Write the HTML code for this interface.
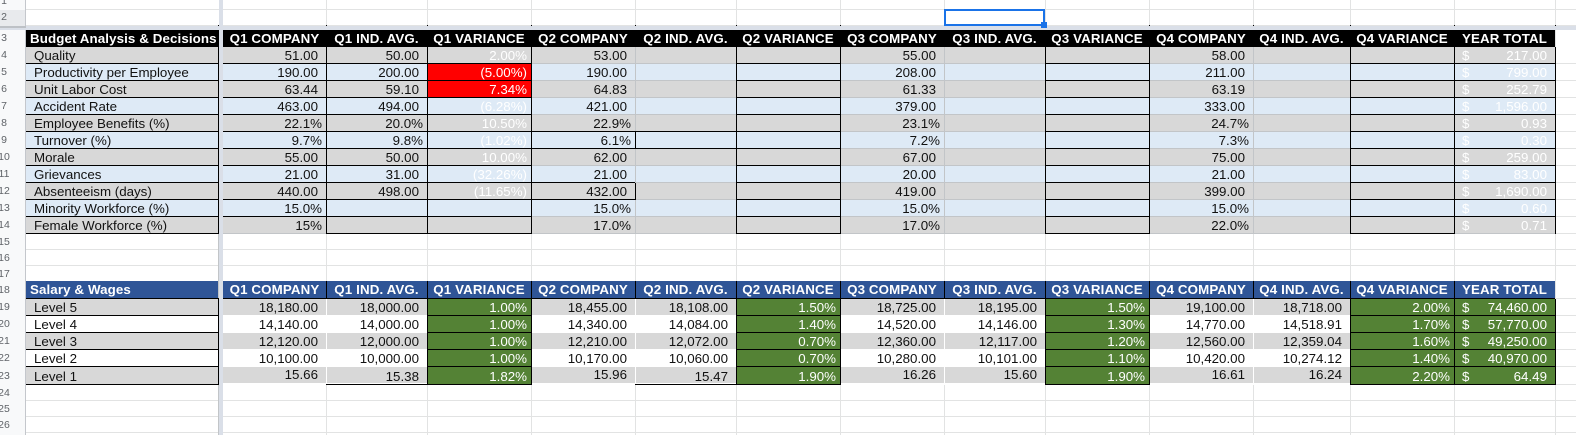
<!DOCTYPE html>
<html><head><meta charset="utf-8"><style>
html,body{margin:0;padding:0;background:#fff}
#p{position:relative;width:1576px;height:435px;overflow:hidden;background:#fff;font:13.33px/17px "Liberation Sans",Arial,sans-serif;color:#111}
svg{position:absolute;left:0;top:0}
.n{position:absolute;left:-10px;width:28px;text-align:center;font-size:10.5px;color:#5f6368;line-height:16px}
.r{position:absolute;left:26px;width:1529px;height:16px;line-height:18px}
.g{background:#d8d8d8}.b{background:#deeaf6}.w{background:#fff}
.h{background:#000;color:#fff;font-weight:bold;height:16px}.hb{background:#2f5597}
.r span{position:absolute;top:0;height:100%;box-sizing:border-box;text-align:right;padding-right:8px;white-space:nowrap;overflow:hidden}
.r .p{padding-right:4px}
.r .a{left:0;width:193px;text-align:left;padding:0 0 0 8px}
.h span{text-align:center;padding:0;letter-spacing:.12px}
.h .a{padding:0 0 0 4px;letter-spacing:.1px}
.c2{left:197px;width:103px}.c3{left:300px;width:101px}.c4{left:401px;width:104px}.c5{left:505px;width:104px}.c6{left:609px;width:101px}.c7{left:710px;width:104px}.c8{left:814px;width:104px}.c9{left:918px;width:101px}.c10{left:1019px;width:104px}.c11{left:1123px;width:104px}.c12{left:1227px;width:97px}.c13{left:1324px;width:104px}.c14{left:1428px;width:101px}
.t{color:#fff}.red{background:#f00;color:#fff}.gr{background:#548235;color:#fff}
.r span.u{line-height:15px}.r span.v{line-height:19px}
.c14 i{position:absolute;left:8px;top:0;font-style:normal}
#fv{position:absolute;left:219px;top:0;width:4px;height:435px;background:#dadfe8}
#fh{position:absolute;left:0;top:26px;width:1576px;height:4px;background:#dadfe8}
#fh2{position:absolute;left:0;top:26px;width:26px;height:2px;background:#bdc1c6}
#hd{position:absolute;left:0;top:0;width:26px;height:435px;background:#f8f9fa;border-right:1px solid #c4c7cc;box-sizing:border-box}
#sel{position:absolute;left:944px;top:9px;width:101px;height:17px;border:2px solid #1a73e8;box-sizing:border-box}
#hnd{position:absolute;left:1041px;top:22px;width:6px;height:6px;background:#1a73e8;border:0}
</style></head><body><div id="p">
<svg width="1576" height="435" shape-rendering="crispEdges"><path fill="none" stroke="#e2e3e3" d="M26 9.5H1576M26 25.5H1576M1555 63.5H1576M1555 80.5H1576M1555 97.5H1576M1555 114.5H1576M1555 131.5H1576M1555 148.5H1576M1555 165.5H1576M1555 182.5H1576M1555 199.5H1576M1555 216.5H1576M26 233.5H1576M26 249.5H1576M26 265.5H1576M1555 298.5H1576M1555 315.5H1576M1555 332.5H1576M1555 349.5H1576M1555 366.5H1576M26 384.5H1576M26 400.5H1576M26 416.5H1576M26 432.5H1576M326.5 0V435M427.5 0V435M531.5 0V435M635.5 0V435M736.5 0V435M840.5 0V435M944.5 0V435M1045.5 0V435M1149.5 0V435M1253.5 0V435M1350.5 0V435M1454.5 0V435M1555.5 0V435"/></svg>
<div id="hd"></div>
<div class="n" style="top:-7px">1</div>
<div style="position:absolute;left:0;top:10px;width:25px;height:16px;background:#e8eaed"></div>
<div class="n" style="top:9px">2</div><div class="n" style="top:30px">3</div><div class="n" style="top:47px">4</div><div class="n" style="top:64px">5</div><div class="n" style="top:81px">6</div><div class="n" style="top:98px">7</div><div class="n" style="top:115px">8</div><div class="n" style="top:132px">9</div><div class="n" style="top:149px">10</div><div class="n" style="top:166px">11</div><div class="n" style="top:183px">12</div><div class="n" style="top:200px">13</div><div class="n" style="top:217px">14</div><div class="n" style="top:234px">15</div><div class="n" style="top:250px">16</div><div class="n" style="top:266px">17</div><div class="n" style="top:282px">18</div><div class="n" style="top:299px">19</div><div class="n" style="top:316px">20</div><div class="n" style="top:333px">21</div><div class="n" style="top:350px">22</div><div class="n" style="top:368px">23</div><div class="n" style="top:385px">24</div><div class="n" style="top:401px">25</div><div class="n" style="top:417px">26</div>

<div class="r h" style="top:30px;height:17px;line-height:18px"><span class="a">Budget Analysis &amp; Decisions</span><span class="c2">Q1 COMPANY</span><span class="c3">Q1 IND. AVG.</span><span class="c4">Q1 VARIANCE</span><span class="c5">Q2 COMPANY</span><span class="c6">Q2 IND. AVG.</span><span class="c7">Q2 VARIANCE</span><span class="c8">Q3 COMPANY</span><span class="c9">Q3 IND. AVG.</span><span class="c10">Q3 VARIANCE</span><span class="c11">Q4 COMPANY</span><span class="c12">Q4 IND. AVG.</span><span class="c13">Q4 VARIANCE</span><span class="c14">YEAR TOTAL</span></div>

<div class="r g" style="top:47px"><span class="a">Quality</span><span class="c2">51.00</span><span class="c3">50.00</span><span class="c4 p t">2.00%</span><span class="c5">53.00</span><span class="c8">55.00</span><span class="c11">58.00</span><span class="c14 t"><i>$</i>217.00</span></div>
<div class="r b" style="top:64px"><span class="a">Productivity per Employee</span><span class="c2">190.00</span><span class="c3">200.00</span><span class="c4 p red">(5.00%)</span><span class="c5">190.00</span><span class="c8">208.00</span><span class="c11">211.00</span><span class="c14 t"><i>$</i>799.00</span></div>
<div class="r g" style="top:81px"><span class="a">Unit Labor Cost</span><span class="c2">63.44</span><span class="c3">59.10</span><span class="c4 p red">7.34%</span><span class="c5">64.83</span><span class="c8">61.33</span><span class="c11">63.19</span><span class="c14 t"><i>$</i>252.79</span></div>
<div class="r b" style="top:98px"><span class="a">Accident Rate</span><span class="c2">463.00</span><span class="c3">494.00</span><span class="c4 p t">(6.28%)</span><span class="c5">421.00</span><span class="c8">379.00</span><span class="c11">333.00</span><span class="c14 t"><i>$</i>1,596.00</span></div>
<div class="r g" style="top:115px"><span class="a">Employee Benefits (%)</span><span class="c2 p">22.1%</span><span class="c3 p">20.0%</span><span class="c4 p t">10.50%</span><span class="c5 p">22.9%</span><span class="c8 p">23.1%</span><span class="c11 p">24.7%</span><span class="c14 t"><i>$</i>0.93</span></div>
<div class="r b" style="top:132px"><span class="a">Turnover (%)</span><span class="c2 p">9.7%</span><span class="c3 p">9.8%</span><span class="c4 p t">(1.02%)</span><span class="c5 p">6.1%</span><span class="c8 p">7.2%</span><span class="c11 p">7.3%</span><span class="c14 t"><i>$</i>0.30</span></div>
<div class="r g" style="top:149px"><span class="a">Morale</span><span class="c2">55.00</span><span class="c3">50.00</span><span class="c4 p t">10.00%</span><span class="c5">62.00</span><span class="c8">67.00</span><span class="c11">75.00</span><span class="c14 t"><i>$</i>259.00</span></div>
<div class="r b" style="top:166px"><span class="a">Grievances</span><span class="c2">21.00</span><span class="c3">31.00</span><span class="c4 p t">(32.26%)</span><span class="c5">21.00</span><span class="c8">20.00</span><span class="c11">21.00</span><span class="c14 t"><i>$</i>83.00</span></div>
<div class="r g" style="top:183px"><span class="a">Absenteeism (days)</span><span class="c2">440.00</span><span class="c3">498.00</span><span class="c4 p t">(11.65%)</span><span class="c5">432.00</span><span class="c8">419.00</span><span class="c11">399.00</span><span class="c14 t"><i>$</i>1,690.00</span></div>
<div class="r b" style="top:200px"><span class="a">Minority Workforce (%)</span><span class="c2 p">15.0%</span><span class="c5 p">15.0%</span><span class="c8 p">15.0%</span><span class="c11 p">15.0%</span><span class="c14 t"><i>$</i>0.60</span></div>
<div class="r g" style="top:217px"><span class="a">Female Workforce (%)</span><span class="c2 p">15%</span><span class="c5 p">17.0%</span><span class="c8 p">17.0%</span><span class="c11 p">22.0%</span><span class="c14 t"><i>$</i>0.71</span></div>

<div class="r h hb" style="top:281px;height:17px;line-height:18px"><span class="a">Salary &amp; Wages</span><span class="c2">Q1 COMPANY</span><span class="c3">Q1 IND. AVG.</span><span class="c4">Q1 VARIANCE</span><span class="c5">Q2 COMPANY</span><span class="c6">Q2 IND. AVG.</span><span class="c7">Q2 VARIANCE</span><span class="c8">Q3 COMPANY</span><span class="c9">Q3 IND. AVG.</span><span class="c10">Q3 VARIANCE</span><span class="c11">Q4 COMPANY</span><span class="c12">Q4 IND. AVG.</span><span class="c13">Q4 VARIANCE</span><span class="c14">YEAR TOTAL</span></div>

<div class="r g" style="top:299px"><span class="a">Level 5</span><span class="c2">18,180.00</span><span class="c3">18,000.00</span><span class="c4 p gr">1.00%</span><span class="c5">18,455.00</span><span class="c6">18,108.00</span><span class="c7 p gr">1.50%</span><span class="c8">18,725.00</span><span class="c9">18,195.00</span><span class="c10 p gr">1.50%</span><span class="c11">19,100.00</span><span class="c12">18,718.00</span><span class="c13 p gr">2.00%</span><span class="c14 gr"><i>$</i>74,460.00</span></div>
<div class="r w" style="top:316px"><span class="a">Level 4</span><span class="c2">14,140.00</span><span class="c3">14,000.00</span><span class="c4 p gr">1.00%</span><span class="c5">14,340.00</span><span class="c6">14,084.00</span><span class="c7 p gr">1.40%</span><span class="c8">14,520.00</span><span class="c9">14,146.00</span><span class="c10 p gr">1.30%</span><span class="c11">14,770.00</span><span class="c12">14,518.91</span><span class="c13 p gr">1.70%</span><span class="c14 gr"><i>$</i>57,770.00</span></div>
<div class="r g" style="top:333px"><span class="a">Level 3</span><span class="c2">12,120.00</span><span class="c3">12,000.00</span><span class="c4 p gr">1.00%</span><span class="c5">12,210.00</span><span class="c6">12,072.00</span><span class="c7 p gr">0.70%</span><span class="c8">12,360.00</span><span class="c9">12,117.00</span><span class="c10 p gr">1.20%</span><span class="c11">12,560.00</span><span class="c12">12,359.04</span><span class="c13 p gr">1.60%</span><span class="c14 gr"><i>$</i>49,250.00</span></div>
<div class="r w" style="top:350px"><span class="a">Level 2</span><span class="c2">10,100.00</span><span class="c3">10,000.00</span><span class="c4 p gr">1.00%</span><span class="c5">10,170.00</span><span class="c6">10,060.00</span><span class="c7 p gr">0.70%</span><span class="c8">10,280.00</span><span class="c9">10,101.00</span><span class="c10 p gr">1.10%</span><span class="c11">10,420.00</span><span class="c12">10,274.12</span><span class="c13 p gr">1.40%</span><span class="c14 gr"><i>$</i>40,970.00</span></div>
<div class="r g" style="top:367px;height:17px;line-height:15px"><span class="a v">Level 1</span><span class="c2 u">15.66</span><span class="c3 v">15.38</span><span class="c4 p gr v">1.82%</span><span class="c5 u">15.96</span><span class="c6 v">15.47</span><span class="c7 p gr v">1.90%</span><span class="c8 u">16.26</span><span class="c9 u">15.60</span><span class="c10 p gr v">1.90%</span><span class="c11 u">16.61</span><span class="c12 u">16.24</span><span class="c13 p gr v">2.20%</span><span class="c14 gr v"><i>$</i>64.49</span></div>

<div id="fv"></div><div id="fh"></div><div id="fh2"></div>
<svg width="1576" height="435" shape-rendering="crispEdges">
<path fill="none" stroke="#c2c5c8" d="M223 63.5H1555M223 80.5H1555M223 97.5H1555M223 114.5H1555M223 131.5H1555M223 148.5H1555M223 165.5H1555M223 182.5H1555M223 199.5H1555M223 216.5H1555M223 233.5H1555M635.5 47V233M944.5 47V233M1253.5 47V233M218.5 234V435"/>
<path fill="none" stroke="#fff" d="M326.5 299V384M635.5 299V384M944.5 299V384M1253.5 299V384M223 383.5H427M531 383.5H736M840 383.5H1045M1149 383.5H1350M223 384.5H326M531 384.5H635M840 384.5H1045M1149 384.5H1350"/>
<path fill="none" stroke="#000" d="M219 25.5h-1M326.5 25v1M427.5 25v1M531.5 25v1M635.5 25v1M736.5 25v1M840.5 25v1M944.5 25v1M1149.5 25v1M1253.5 25v1M1350.5 25v1M1454.5 25v1M1555.5 25v1
M26 63.5H219M223 63.5H531M736 63.5H840M1045 63.5H1149M1350 63.5H1555
M26 80.5H219M223 80.5H531M736 80.5H840M1045 80.5H1149M1350 80.5H1555
M26 97.5H219M223 97.5H531M736 97.5H840M1045 97.5H1149M1350 97.5H1555
M26 114.5H219M223 114.5H531M736 114.5H840M1045 114.5H1149M1350 114.5H1555
M26 131.5H219M223 131.5H840M1045 131.5H1149M1350 131.5H1555
M26 148.5H219M223 148.5H840M1045 148.5H1149M1350 148.5H1555
M26 165.5H219M223 165.5H531M736 165.5H840M1045 165.5H1149M1350 165.5H1555
M26 182.5H219M223 182.5H635M736 182.5H840M1045 182.5H1149M1350 182.5H1555
M26 199.5H219M223 199.5H635M736 199.5H840M1045 199.5H1149M1350 199.5H1555
M26 216.5H219M223 216.5H531M736 216.5H840M1045 216.5H1149M1350 216.5H1555
M26 233.5H219M326 233.5H531M736 233.5H840M1045 233.5H1149M1350 233.5H1454
M218.5 47V234M326.5 47V234M427.5 47V234M531.5 47V234M736.5 47V234M840.5 47V234M1045.5 47V234M1149.5 47V234M1350.5 47V234M1454.5 47V234M1555.5 47V234M635.5 132V149M635.5 183V200
M26 298.5H219M223 298.5H1555
M326.5 281V298M427.5 281V298M531.5 281V298M635.5 281V298M736.5 281V298M840.5 281V298M944.5 281V298M1045.5 281V298M1149.5 281V298M1253.5 281V298M1350.5 281V298M1454.5 281V298
M26 315.5H219M427 315.5H531M736 315.5H840M1045 315.5H1149M1350 315.5H1555
M26 332.5H219M427 332.5H531M736 332.5H840M1045 332.5H1149M1350 332.5H1555
M26 349.5H219M427 349.5H531M736 349.5H840M1045 349.5H1149M1350 349.5H1555
M26 366.5H219M427 366.5H531M736 366.5H840M1045 366.5H1149M1350 366.5H1555
M26 384.5H219M326 384.5H531M635 384.5H840M1045 384.5H1149M1350 384.5H1555
M218.5 299V385M427.5 299V385M531.5 299V385M736.5 299V385M840.5 299V385M1045.5 299V385M1149.5 299V385M1350.5 299V385M1454.5 299V385M1555.5 299V385"/>
</svg>
<div id="sel"></div><div id="hnd"></div>
</div></body></html>
